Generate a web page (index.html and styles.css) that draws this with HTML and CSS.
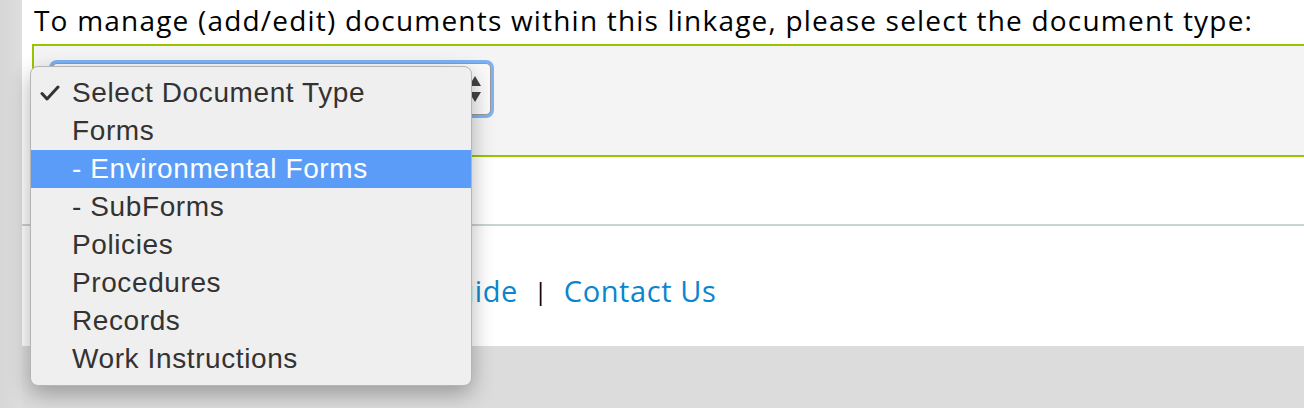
FILE: index.html
```html
<!DOCTYPE html>
<html>
<head>
<meta charset="utf-8">
<link rel="stylesheet" href="styles.css">
</head>
<body>
<div class="page">
  <div class="main">
    <p class="intro">To manage (add/edit) documents within this linkage, please select the document type:</p>
    <div class="panel">
      <div class="select-box">
        <span class="select-value">Select Document Type</span>
        <svg class="select-arrows" width="14" height="30" viewBox="0 0 14 30"><path d="M7 2 L13 12 L1 12 Z M7 28 L13 18 L1 18 Z" fill="#444"/></svg>
      </div>
    </div>
    <div class="spacer"></div>
  </div>
  <div class="footer">
    <a class="link" href="#">Home</a><span class="sep">|</span><a class="link" href="#">User Guide</a><span class="sep">|</span><a class="link" href="#">Contact Us</a>
  </div>
</div>
<ul class="menu">
  <li class="item checked"><svg class="check" width="20" height="16" viewBox="0 0 20 16"><path d="M2 8.5 L7 14 L18 2" fill="none" stroke="#333" stroke-width="3" stroke-linecap="round" stroke-linejoin="round"/></svg>Select Document Type</li>
  <li class="item">Forms</li>
  <li class="item active">- Environmental Forms</li>
  <li class="item">- SubForms</li>
  <li class="item">Policies</li>
  <li class="item">Procedures</li>
  <li class="item">Records</li>
  <li class="item">Work Instructions</li>
</ul>
</body>
</html>
```

FILE: styles.css
```css
html, body {
  margin: 0;
  padding: 0;
}
body {
  background: linear-gradient(to right, #d6d6d6 0, #dedede 22px, #dcdcdc 22px);
  height: 408px;
  overflow: hidden;
  position: relative;
  font-family: "Open Sans", "Liberation Sans", sans-serif;
}
.page {
  margin-left: 22px;
  background: #ffffff;
  height: 346px;
}
.main {
  padding-left: 10px;
  border-bottom: 2px solid #c9d3d1;
}
.intro {
  margin: 0;
  padding: 3px 0 0 2px;
  height: 41px;
  font-size: 28px;
  line-height: 34px;
  letter-spacing: 1.2px;
  white-space: nowrap;
  color: #000;
}
.panel {
  background: #f4f4f4;
  border: 2px solid #9bc400;
  border-right: none;
  padding: 17px 0 0 16px;
  box-sizing: border-box;
  height: 113px;
}
.select-box {
  width: 439px;
  height: 52px;
  border: 1px solid #9a9a9a;
  border-radius: 5px;
  background: #fafafa;
  box-shadow: 0 0 0 3px #7fb2f5;
  display: flex;
  align-items: center;
  justify-content: space-between;
  padding: 0 8px 0 18px;
  box-sizing: border-box;
  margin-left: 2px;
}
.select-value {
  font-size: 22px;
  color: #333;
}
.spacer {
  height: 67px;
}
.footer {
  padding: 45px 0 0 0;
  display: flex;
  align-items: center;
  font-size: 29px;
  letter-spacing: 0.6px;
  margin-left: 209px;
}
.link {
  color: #0a86cf;
  text-decoration: none;
}
.sep {
  color: #000;
  margin: 0 16px;
  font-size: 24px;
}
.menu {
  position: absolute;
  left: 30px;
  top: 66px;
  width: 442px;
  height: 320px;
  margin: 0;
  padding: 7px 0 0 0;
  box-sizing: border-box;
  list-style: none;
  background: #efefef;
  border: 1px solid #b5b5b5;
  border-radius: 8px;
  box-shadow: 0 8px 22px rgba(0, 0, 0, 0.3);
  font-family: "Liberation Sans", Arial, sans-serif;
  font-size: 28px;
  letter-spacing: 0.6px;
  color: #333;
}
.item {
  height: 38px;
  line-height: 38px;
  padding-left: 41px;
  position: relative;
  white-space: nowrap;
}
.item.active {
  background: #5b9cf8;
  color: #fff;
}
.check {
  position: absolute;
  left: 9px;
  top: 11px;
}
```
